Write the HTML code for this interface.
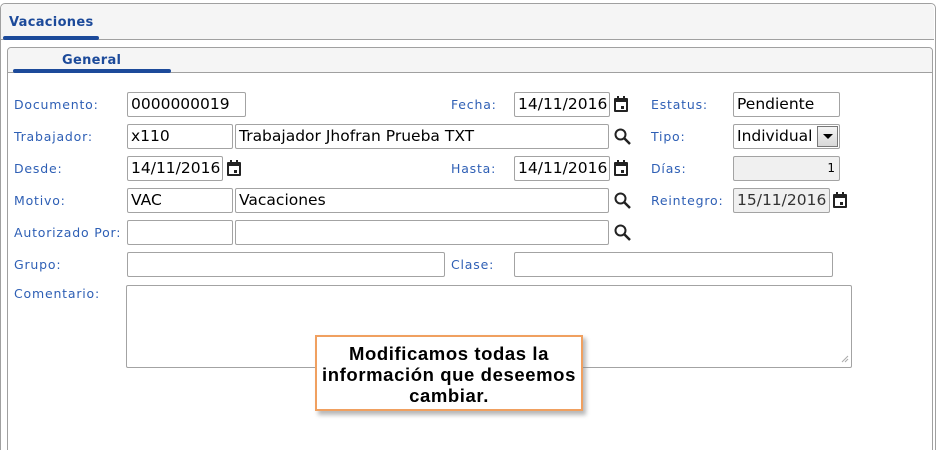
<!DOCTYPE html><html><head><meta charset="utf-8"><style>
*{box-sizing:border-box;margin:0;padding:0}
html,body{width:937px;height:450px;overflow:hidden}
body{background:#fff;position:relative;font-family:"DejaVu Sans","Liberation Sans",sans-serif}
.a{position:absolute}
.outer{left:0;top:3px;width:936px;height:460px;border:1px solid #a0a0a0;border-radius:5px 5px 0 0;background:#fff}
.oh{left:1px;top:4px;width:933px;height:36px;background:#f5f5f5;border-bottom:1px solid #a0a0a0;border-radius:5px 5px 0 0}
.inner{left:7px;top:47px;width:926px;height:420px;border:1px solid #a0a0a0;border-radius:4px 4px 0 0}
.ih{left:8px;top:48px;width:924px;height:25px;background:#f5f5f5;border-bottom:1px solid #a0a0a0;border-radius:4px 4px 0 0}
.tab{font-weight:bold;font-size:13px;color:#1c4a9a;letter-spacing:.3px}
.bar{height:4px;background:#1c4a9a;border-radius:2px}
.l{font-size:12.5px;color:#2e5fb5;letter-spacing:.8px}
.i{border:1px solid #a3a3a3;border-radius:2px;height:25px;font-size:15.5px;color:#000;padding:1px 0 0 3px;line-height:21px;white-space:nowrap;overflow:hidden;background:#fff}
.g{background:#f0f0f0}
</style></head><body>
<div class="a outer"></div><div class="a oh"></div>
<div class="a tab" style="left:9px;top:15px">Vacaciones</div>
<div class="a bar" style="left:3px;top:36px;width:96px"></div>
<div class="a inner"></div><div class="a ih"></div>
<div class="a tab" style="left:62px;top:53px">General</div>
<div class="a bar" style="left:13px;top:69px;width:158px"></div>

<div class="a l" style="left:14px;top:97px">Documento:</div>
<div class="a l" style="left:14px;top:129px">Trabajador:</div>
<div class="a l" style="left:14px;top:161px">Desde:</div>
<div class="a l" style="left:14px;top:193px">Motivo:</div>
<div class="a l" style="left:14px;top:225px">Autorizado Por:</div>
<div class="a l" style="left:14px;top:257px">Grupo:</div>
<div class="a l" style="left:14px;top:286px">Comentario:</div>
<div class="a l" style="left:451px;top:97px">Fecha:</div>
<div class="a l" style="left:451px;top:161px">Hasta:</div>
<div class="a l" style="left:451px;top:257px">Clase:</div>
<div class="a l" style="left:651px;top:97px">Estatus:</div>
<div class="a l" style="left:651px;top:129px">Tipo:</div>
<div class="a l" style="left:651px;top:161px">Días:</div>
<div class="a l" style="left:651px;top:193px">Reintegro:</div>

<div class="a i" style="left:127px;top:92px;width:119px">0000000019</div>
<div class="a i" style="left:514px;top:92px;width:96px">14/11/2016</div>
<div class="a i" style="left:733px;top:92px;width:107px">Pendiente</div>
<div class="a i" style="left:127px;top:124px;width:106px">x110</div>
<div class="a i" style="left:235px;top:124px;width:374px">Trabajador Jhofran Prueba TXT</div>
<div class="a i" style="left:733px;top:124px;width:107px">Individual</div>
<div class="a" style="left:817px;top:126px;width:21px;height:21px;background:linear-gradient(#f4f4f4,#d8d8d8);border:1px solid #777"><div class="a" style="left:5px;top:7px;border-left:5px solid transparent;border-right:5px solid transparent;border-top:5px solid #000"></div></div>
<div class="a i" style="left:127px;top:156px;width:96px">14/11/2016</div>
<div class="a i" style="left:514px;top:156px;width:96px">14/11/2016</div>
<div class="a i g" style="left:733px;top:156px;width:107px;text-align:right;padding-right:4px;font-size:12px">1</div>
<div class="a i" style="left:127px;top:188px;width:106px">VAC</div>
<div class="a i" style="left:235px;top:188px;width:374px">Vacaciones</div>
<div class="a i g" style="left:733px;top:188px;width:97px;color:#333">15/11/2016</div>
<div class="a i" style="left:127px;top:220px;width:106px"></div>
<div class="a i" style="left:235px;top:220px;width:374px"></div>
<div class="a i" style="left:127px;top:252px;width:318px"></div>
<div class="a i" style="left:514px;top:252px;width:319px"></div>
<div class="a i" style="left:126px;top:285px;width:726px;height:83px"></div>

<svg class="a" style="left:0;top:0" width="937" height="450">
<defs>
<g id="cal"><rect x="1" y="2" width="14" height="14" rx="1" fill="#222"/><rect x="3" y="6" width="10" height="8" fill="#fff"/><rect x="4" y="0" width="2" height="3" fill="#222"/><rect x="10" y="0" width="2" height="3" fill="#222"/><rect x="8" y="10" width="3" height="3" fill="#222"/></g>
<g id="sr"><circle cx="6.5" cy="6.5" r="5" fill="none" stroke="#222" stroke-width="2"/><path d="M10 10 L16 16" stroke="#222" stroke-width="2.5"/></g>
</defs>
<use href="#cal" x="613" y="96"/><use href="#cal" x="226" y="160"/><use href="#cal" x="613" y="160"/><use href="#cal" x="832" y="192"/>
<use href="#sr" x="614" y="128"/><use href="#sr" x="614" y="192"/><use href="#sr" x="614" y="224"/>
<path d="M848 356 L842 362 M848 359 L845 362" stroke="#aaa" stroke-width="1"/>
</svg>

<div class="a" style="left:318px;top:338px;width:268px;height:77px;background:#888;opacity:.6;filter:blur(2px)"></div>
<div class="a" style="left:315px;top:335px;width:268px;height:76px;background:#fff;border:2px solid #f0a060;font-family:'Liberation Sans',sans-serif;font-weight:bold;font-size:18.5px;letter-spacing:.6px;text-align:center;line-height:21px;padding-top:6px;color:#000;white-space:nowrap">Modificamos todas la<br>información que deseemos<br>cambiar.</div>
</body></html>
